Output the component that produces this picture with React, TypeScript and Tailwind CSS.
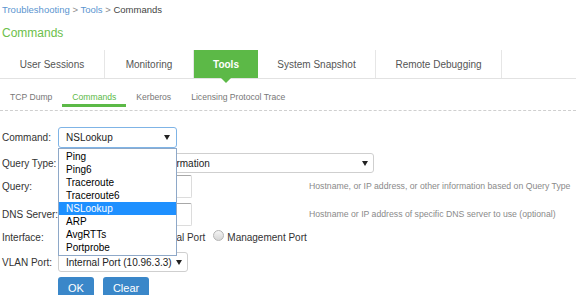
import React from "react";

const tabs = [
  { label: "User Sessions", w: "w-[105px]" },
  { label: "Monitoring", w: "w-[89px]" },
  { label: "Tools", w: "w-[64px]", active: true },
  { label: "System Snapshot", w: "w-[118px]" },
  { label: "Remote Debugging", w: "w-[126px]" },
];

const subTabs = ["TCP Dump", "Commands", "Kerberos", "Licensing Protocol Trace"];

const commands = ["Ping", "Ping6", "Traceroute", "Traceroute6", "NSLookup", "ARP", "AvgRTTs", "Portprobe"];

const Arrow = () => (
  <svg width="6" height="5" viewBox="0 0 6 5" className="shrink-0">
    <polygon points="0,0 6,0 3,5" fill="#222" />
  </svg>
);

const Radio = () => (
  <span className="inline-block w-[11px] h-[11px] rounded-full border border-[#b5b5b5] bg-gradient-to-b from-[#f5f5f5] to-[#d6d6d6] shrink-0"></span>
);

const Label = ({ children }: { children: React.ReactNode }) => (
  <div className="w-[56px] shrink-0 whitespace-nowrap text-[10px] text-[#333]">{children}</div>
);

const App = () => {
  return (
    <div className="w-[576px] h-[295px] overflow-hidden bg-white font-['Liberation_Sans',Arial,sans-serif]">
      {/* breadcrumb */}
      <div className="h-[20px] pl-[2px] leading-[20px] text-[9.5px]">
        <span className="text-[#5b95d0]">Troubleshooting</span>
        <span className="text-[#888]"> &gt; </span>
        <span className="text-[#5b95d0]">Tools</span>
        <span className="text-[#888]"> &gt; </span>
        <span className="text-[#444]">Commands</span>
      </div>
      <h1 className="h-[26px] pl-[2px] leading-[26px] text-[12px] text-[#6cc04a]">Commands</h1>

      {/* main tabs */}
      <div className="mt-[4px] flex h-[29px] border-b border-[#e2e2e2]">
        {tabs.map((t) => (
          <div
            key={t.label}
            className={
              t.active
                ? `${t.w} relative flex items-center justify-center bg-[#5cb947] text-[10px] font-bold text-white`
                : `${t.w} flex items-center justify-center border-r border-[#e6e6e6] text-[10px] text-[#555]`
            }
          >
            {t.label}
            {t.active && (
              <span className="absolute left-1/2 top-full -translate-x-1/2 w-0 h-0 border-l-[5px] border-r-[5px] border-t-[5px] border-l-transparent border-r-transparent border-t-[#5cb947]"></span>
            )}
          </div>
        ))}
      </div>

      {/* sub tabs */}
      <div className="flex h-[32px] pt-[12px] border-b border-dashed border-[#cfcfcf]">
        {subTabs.map((s) => (
          <div key={s} className="flex flex-col">
            <span
              className={
                s === "Commands"
                  ? "px-[10px] h-[12px] leading-[12px] text-[8.6px] text-[#5cb947]"
                  : "px-[10px] h-[12px] leading-[12px] text-[8.6px] text-[#777]"
              }
            >
              {s}
            </span>
            <span className={s === "Commands" ? "mt-[1px] h-[3px] bg-[#5cb947]" : "mt-[1px] h-[3px]"}></span>
          </div>
        ))}
      </div>

      {/* form */}
      <div className="pl-[2px]">
        <div className="mt-[16px] flex h-[21px] items-center">
          <Label>Command:</Label>
          <div className="relative w-[119px] h-[21px]">
            <div className="flex h-full items-center justify-between rounded-[3px] border border-[#7fb4e6] pl-[7px] pr-[6px] text-[10px] text-[#222]">
              NSLookup
              <Arrow />
            </div>
            <ul className="absolute left-0 top-full z-10 w-[119px] border border-[#8ea8c8] bg-white py-[1px]">
              {commands.map((c) => (
                <li
                  key={c}
                  className={
                    c === "NSLookup"
                      ? "h-[13px] bg-[#1e90ff] pl-[7px] leading-[13px] text-[10px] text-white"
                      : "h-[13px] pl-[7px] leading-[13px] text-[10px] text-black"
                  }
                >
                  {c}
                </li>
              ))}
            </ul>
          </div>
        </div>

        <div className="mt-[5px] flex h-[20px] items-center">
          <Label>Query Type:</Label>
          <div className="flex h-full w-[316px] items-center justify-between rounded-[3px] border border-[#cfcfcf] pl-[7px] pr-[5px] text-[10px] text-[#222]">
            Host and IP Address Information
            <Arrow />
          </div>
        </div>

        <div className="mt-[2px] flex h-[23px] items-center">
          <Label>Query:</Label>
          <div className="h-full w-[134px] rounded-[2px] border border-[#dcdcdc] border-t-[#a8a8a8]"></div>
          <span className="ml-[117px] whitespace-nowrap text-[8.7px] text-[#8a8a8a]">
            Hostname, or IP address, or other information based on Query Type
          </span>
        </div>

        <div className="mt-[5px] flex h-[23px] items-center">
          <Label>DNS Server:</Label>
          <div className="h-full w-[134px] rounded-[2px] border border-[#dcdcdc] border-t-[#a8a8a8]"></div>
          <span className="ml-[117px] whitespace-nowrap text-[8.7px] text-[#8a8a8a]">
            Hostname or IP address of specific DNS server to use (optional)
          </span>
        </div>

        <div className="mt-[4px] flex h-[14px] items-center text-[10px] text-[#333]">
          <Label>Interface:</Label>
          <div className="flex items-center gap-[3px]">
            <Radio />
            <span>Internal Port</span>
            <span className="ml-[4px]"><Radio /></span>
            <span>External Port</span>
            <span className="ml-[5px]"><Radio /></span>
            <span>Management Port</span>
          </div>
        </div>

        <div className="mt-[8px] flex h-[20px] items-center">
          <Label>VLAN Port:</Label>
          <div className="flex h-full w-[130px] items-center justify-between rounded-[3px] border border-[#cfcfcf] pl-[7px] pr-[5px] text-[10px] text-[#222]">
            Internal Port (10.96.3.3)
            <Arrow />
          </div>
        </div>

        <div className="mt-[5px] ml-[56px] flex gap-[9px]">
          <button className="h-[22px] rounded-[3px] bg-[#3a87c9] px-[10px] text-[11px] text-white">OK</button>
          <button className="h-[22px] rounded-[3px] bg-[#3a87c9] px-[10px] text-[11px] text-white">Clear</button>
        </div>
      </div>
    </div>
  );
};

export default App;
